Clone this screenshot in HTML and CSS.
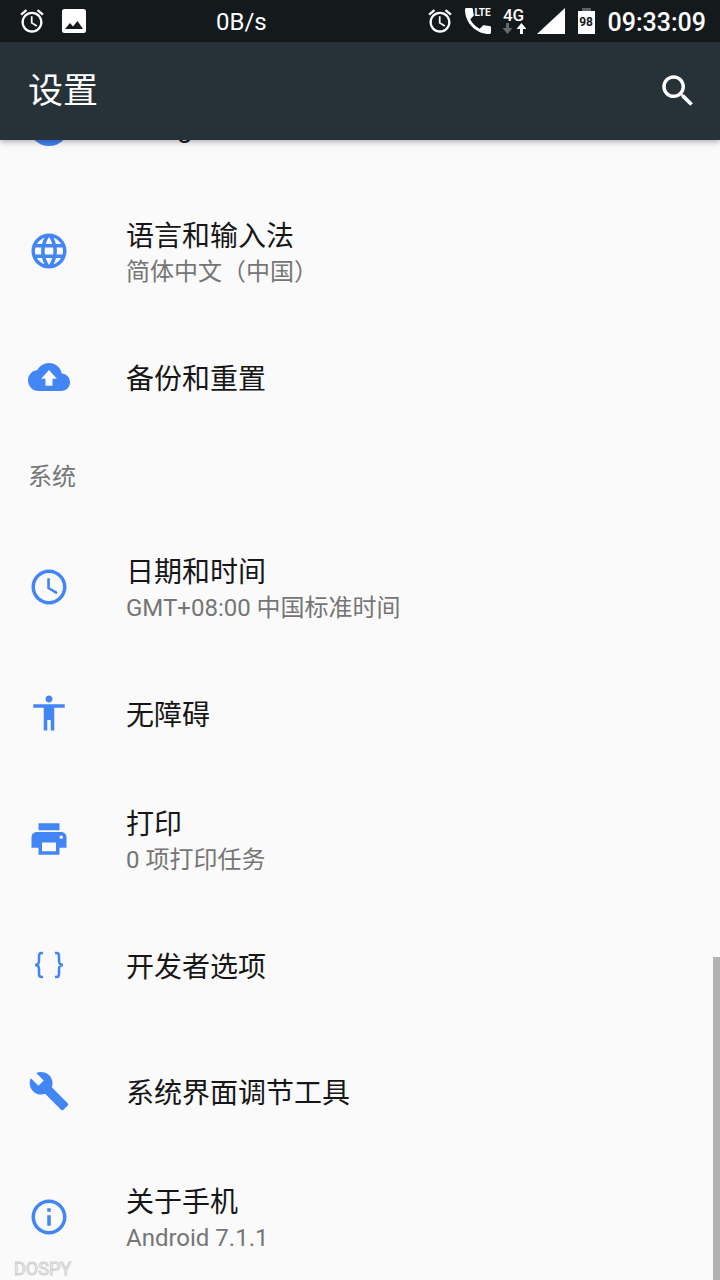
FILE: index.html
```html
<!DOCTYPE html>
<html lang="zh-CN">
<head>
<meta charset="utf-8">
<meta name="viewport" content="width=device-width, initial-scale=1">
<title>设置</title>
<link rel="stylesheet" href="styles.css">
</head>
<body>
<div class="top">
  <div class="status">
    <div class="status-left">
      <svg class="status-icon" viewBox="0 0 24 24" aria-hidden="true"><path d="M22 5.720l-4.600-3.860-1.290 1.530 4.600 3.860L22 5.720zM7.880 3.390L6.600 1.860 2 5.710l1.290 1.530 4.590-3.850zM12.500 8H11v6l4.750 2.850.750-1.230-4-2.370V8zM12 4c-4.970 0-9 4.030-9 9s4.020 9 9 9c4.970 0 9-4.030 9-9s-4.030-9-9-9zm0 16c-3.870 0-7-3.130-7-7s3.130-7 7-7 7 3.130 7 7-3.130 7-7 7z"/></svg>
      <svg class="status-icon" viewBox="0 0 28 28" aria-hidden="true"><path fill-rule="evenodd" d="M4.500 2h19A2.500 2.500 0 0 1 26 4.500v19a2.500 2.500 0 0 1-2.500 2.500h-19A2.500 2.500 0 0 1 2 23.500v-19A2.500 2.500 0 0 1 4.500 2zM5 22h18l-5.500-8-4.500 5.500-3-3.500z"/></svg>
    </div>
    <span class="speed">0B/s</span>
    <div class="status-right">
      <svg class="status-icon" viewBox="0 0 24 24" aria-hidden="true"><path d="M22 5.720l-4.600-3.860-1.290 1.530 4.600 3.860L22 5.720zM7.880 3.390L6.600 1.860 2 5.710l1.290 1.530 4.590-3.850zM12.500 8H11v6l4.750 2.850.750-1.230-4-2.370V8zM12 4c-4.970 0-9 4.030-9 9s4.020 9 9 9c4.970 0 9-4.030 9-9s-4.030-9-9-9zm0 16c-3.870 0-7-3.130-7-7s3.130-7 7-7 7 3.130 7 7-3.130 7-7 7z"/></svg>
      <span class="call">
        <svg class="call-icon" viewBox="3 3 18 18" aria-hidden="true"><path d="M6.620 10.790c1.440 2.830 3.760 5.140 6.590 6.590l2.200-2.200c.270-.270.670-.360 1.020-.240 1.120.370 2.330.570 3.570.570.550 0 1 .450 1 1V20c0 .550-.450 1-1 1-9.390 0-17-7.610-17-17 0-.550.450-1 1-1h3.500c.550 0 1 .450 1 1 0 1.250.200 2.450.570 3.570.110.350.030.740-.250 1.020l-2.200 2.200z"/></svg>
        <span class="lte">LTE</span>
      </span>
      <span class="net">
        <span class="net-type">4G</span>
        <svg class="net-arrows" viewBox="0 0 24 11" aria-hidden="true"><path fill="#666a6c" d="M4 0h3v5h3.500l-5 6-5-6H4z"/><path d="M18 11h3V6h3.500l-5-6-5 6H18z"/></svg>
      </span>
      <svg class="signal" viewBox="0 0 28 26" aria-hidden="true"><path d="M28 0v26H0z"/></svg>
      <span class="battery">98</span>
      <time class="clock">09:33:09</time>
    </div>
  </div>
  <header class="bar">
    <h1 class="bar-title">设置</h1>
    <button class="search" type="button" aria-label="搜索">
      <svg viewBox="0 0 24 24" aria-hidden="true"><path d="M15.500 14h-.790l-.280-.270C15.410 12.590 16 11.110 16 9.500 16 5.910 13.090 3 9.500 3S3 5.910 3 9.500 5.910 16 9.500 16c1.610 0 3.090-.590 4.230-1.570l.270.280v.790l5 4.990L20.490 19l-4.990-5zm-6 0C7.010 14 5 11.990 5 9.500S7.010 5 9.500 5 14 7.010 14 9.500 11.990 14 9.500 14z"/></svg>
    </button>
  </header>
</div>

<main class="list">
  <a class="row" href="#google">
    <svg class="icon" viewBox="0 0 42 42" aria-hidden="true"><circle cx="21" cy="21" r="21"/></svg>
    <span class="text"><span class="title">Google</span></span>
  </a>
  <a class="row" href="#language">
    <svg class="icon" viewBox="0 0 24 24" aria-hidden="true"><path d="M11.990 2C6.470 2 2 6.480 2 12s4.470 10 9.990 10C17.520 22 22 17.520 22 12S17.520 2 11.990 2zm6.930 6h-2.950c-.320-1.250-.780-2.450-1.380-3.560 1.840.630 3.370 1.910 4.330 3.560zM12 4.040c.830 1.200 1.480 2.530 1.910 3.960h-3.820c.430-1.430 1.080-2.760 1.910-3.960zM4.260 14C4.100 13.360 4 12.690 4 12s.100-1.360.260-2h3.380c-.080.660-.140 1.320-.140 2s.060 1.340.140 2H4.260zm.820 2h2.950c.320 1.250.780 2.450 1.380 3.560-1.840-.630-3.370-1.900-4.330-3.560zm2.950-8H5.080c.960-1.660 2.490-2.930 4.330-3.560C8.810 5.550 8.350 6.750 8.030 8zM12 19.960c-.830-1.200-1.480-2.530-1.910-3.960h3.820c-.430 1.430-1.080 2.760-1.910 3.960zM14.340 14H9.660c-.090-.660-.160-1.320-.160-2s.070-1.350.160-2h4.680c.090.650.160 1.320.160 2s-.070 1.340-.160 2zm.250 5.560c.600-1.110 1.060-2.310 1.380-3.560h2.950c-.960 1.650-2.490 2.930-4.330 3.560zM16.360 14c.080-.660.140-1.320.140-2s-.060-1.340-.140-2h3.380c.160.640.260 1.310.260 2s-.100 1.360-.260 2h-3.380z"/></svg>
    <span class="text"><span class="title">语言和输入法</span><span class="sub">简体中文（中国）</span></span>
  </a>
  <a class="row" href="#backup">
    <svg class="icon" viewBox="0 0 24 24" aria-hidden="true"><path d="M19.350 10.040C18.670 6.590 15.640 4 12 4 9.110 4 6.600 5.640 5.350 8.040 2.340 8.360 0 10.910 0 14c0 3.310 2.690 6 6 6h13c2.760 0 5-2.240 5-5 0-2.640-2.050-4.780-4.650-4.960zM14 13v4h-4v-4H7.500L12 8l4.500 5H14z"/></svg>
    <span class="text"><span class="title">备份和重置</span></span>
  </a>
  <h2 class="category">系统</h2>
  <a class="row" href="#date">
    <svg class="icon" viewBox="0 0 24 24" aria-hidden="true"><path d="M11.990 2C6.470 2 2 6.480 2 12s4.470 10 9.990 10C17.520 22 22 17.520 22 12S17.520 2 11.990 2zM12 20c-4.420 0-8-3.580-8-8s3.580-8 8-8 8 3.580 8 8-3.580 8-8 8zm.500-13H11v6l5.250 3.150.750-1.230-4.500-2.670z"/></svg>
    <span class="text"><span class="title">日期和时间</span><span class="sub">GMT+08:00 中国标准时间</span></span>
  </a>
  <a class="row" href="#accessibility">
    <svg class="icon" viewBox="0 0 24 24" aria-hidden="true"><path d="M12 2c1.100 0 2 .900 2 2s-.900 2-2 2-2-.900-2-2 .900-2 2-2zm9 7h-6v13h-2v-6h-2v6H9V9H3V7h18v2z"/></svg>
    <span class="text"><span class="title">无障碍</span></span>
  </a>
  <a class="row" href="#print">
    <svg class="icon" viewBox="0 0 24 24" aria-hidden="true"><path d="M19 8H5c-1.660 0-3 1.340-3 3v6h4v4h12v-4h4v-6c0-1.660-1.340-3-3-3zm-3 11H8v-5h8v5zm3-7c-.550 0-1-.450-1-1s.450-1 1-1 1 .450 1 1-.450 1-1 1zm-1-9H6v4h12V3z"/></svg>
    <span class="text"><span class="title">打印</span><span class="sub">0 项打印任务</span></span>
  </a>
  <a class="row" href="#developer">
    <svg class="icon line" viewBox="0 0 42 42" aria-hidden="true"><path d="M15 9h-1.500q-2.500 0-2.500 3v5q0 4-4 4 4 0 4 4v5q0 3 2.500 3H15M27 9h1.500q2.500 0 2.500 3v5q0 4 4 4-4 0-4 4v5q0 3-2.500 3H27"/></svg>
    <span class="text"><span class="title">开发者选项</span></span>
  </a>
  <a class="row" href="#tuner">
    <svg class="icon" viewBox="0 0 24 24" aria-hidden="true"><path d="M22.700 19l-9.100-9.100c.900-2.300.400-5-1.500-6.900-2-2-5-2.400-7.400-1.300L9 6 6 9 1.600 4.700C.400 7.100.900 10.100 2.900 12.100c1.900 1.900 4.600 2.400 6.900 1.500l9.100 9.100c.400.400 1 .400 1.400 0l2.300-2.300c.500-.400.500-1.100.100-1.400z"/></svg>
    <span class="text"><span class="title">系统界面调节工具</span></span>
  </a>
  <a class="row" href="#about">
    <svg class="icon" viewBox="0 0 24 24" aria-hidden="true"><path d="M11 17h2v-6h-2v6zm1-15C6.480 2 2 6.480 2 12s4.480 10 10 10 10-4.480 10-10S17.520 2 12 2zm0 18c-4.410 0-8-3.590-8-8s3.590-8 8-8 8 3.590 8 8-3.590 8-8 8zM11 9h2V7h-2v2z"/></svg>
    <span class="text"><span class="title">关于手机</span><span class="sub">Android 7.1.1</span></span>
  </a>
  <span class="watermark">DOSPY</span>
</main>
<div class="scrollbar"></div>
</body>
</html>
```
FILE: styles.css
```css
* {
  box-sizing: border-box;
}

body {
  margin: 0;
  background: #fafafa;
  color: #161616;
  font-family: Roboto, "Noto Sans CJK SC", sans-serif;
}

.top {
  position: sticky;
  top: 0;
  z-index: 2;
  color: #fff;
  box-shadow: 0 2px 6px rgba(0, 0, 0, 0.3);
}

.top svg {
  fill: currentColor;
}

.status {
  position: relative;
  display: flex;
  align-items: center;
  justify-content: space-between;
  height: 42px;
  padding: 0 14px 0 18px;
  background: #14191c;
}

.status-left,
.status-right {
  display: flex;
  align-items: center;
}

.status-left {
  gap: 14px;
}

.status-right {
  gap: 11px;
}

.status-icon {
  width: 28px;
  height: 28px;
}

.speed {
  position: absolute;
  left: 30%;
  top: 8px;
  font-size: 24px;
  line-height: 28px;
}

.call {
  position: relative;
  width: 26px;
  height: 26px;
}

.call-icon {
  display: block;
  width: 26px;
  height: 26px;
}

.lte {
  position: absolute;
  top: -1px;
  right: 0;
  font-size: 10px;
  line-height: 12px;
  font-weight: 700;
}

.net {
  display: flex;
  flex-direction: column;
  align-items: center;
  width: 24px;
}

.net-type {
  font-size: 17px;
  line-height: 15px;
  font-weight: 500;
}

.net-arrows {
  width: 24px;
  height: 11px;
}

.signal {
  width: 28px;
  height: 26px;
}

.battery {
  position: relative;
  width: 17px;
  height: 23px;
  margin: 3px 2px 0;
  background: #fff;
  color: #14191c;
  font-size: 12px;
  line-height: 22px;
  font-weight: 700;
  text-align: center;
}

.battery::before {
  content: "";
  position: absolute;
  top: -3px;
  left: 4px;
  width: 9px;
  height: 3px;
  background: #5f6365;
}

.clock {
  padding-top: 3px;
  font-size: 25px;
  line-height: 28px;
  font-weight: 500;
}

.bar {
  display: flex;
  align-items: center;
  justify-content: space-between;
  height: 98px;
  padding: 0 21px 0 28px;
  background: #263238;
}

.bar-title {
  margin: 0;
  padding-top: 2px;
  font-size: 35px;
  line-height: 48px;
  font-weight: 400;
}

.search {
  display: flex;
  padding: 0;
  border: 0;
  background: none;
  color: inherit;
}

.search svg {
  width: 42px;
  height: 42px;
}

/* The list is scrolled, so its first row sits under the top bar. */
.list {
  position: relative;
  margin-top: -78px;
}

.row {
  display: flex;
  align-items: center;
  gap: 56px;
  min-height: 126px;
  padding: 0 28px;
  color: inherit;
  text-decoration: none;
}

.icon {
  flex: none;
  width: 42px;
  height: 42px;
  fill: #4285f4;
}

.line {
  fill: none;
  stroke: #4285f4;
  stroke-width: 2.5;
}

.text {
  display: flex;
  flex-direction: column;
  padding-top: 6px;
}

.title {
  font-size: 28px;
  line-height: 36px;
}

.sub {
  color: #757575;
  font-size: 24px;
  line-height: 34px;
}

.category {
  margin: 0;
  padding: 20px 28px 30px;
  color: #757575;
  font-size: 24px;
  line-height: 34px;
  font-weight: 400;
}

.watermark {
  position: absolute;
  left: 14px;
  bottom: 1px;
  color: #fafafa;
  font-size: 18px;
  line-height: 20px;
  -webkit-text-stroke: 1px #cfcfcf;
}

.scrollbar {
  position: fixed;
  right: 0;
  bottom: 0;
  z-index: 1;
  width: 7px;
  height: 323px;
  background: #b2b2b2;
}
```
